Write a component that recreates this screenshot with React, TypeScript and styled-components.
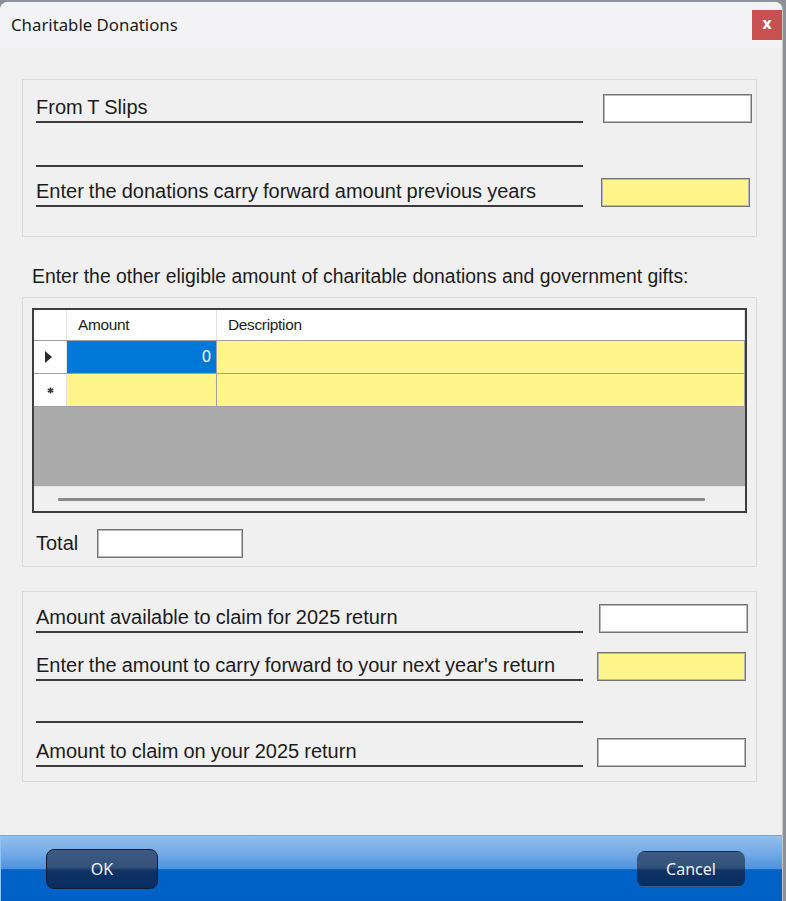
import React from 'react';
import styled, { createGlobalStyle } from 'styled-components';

const GlobalStyle = createGlobalStyle`
  html, body {
    margin: 0;
    padding: 0;
    background: #8d9096;
  }
  #root {
    height: 901px;
    overflow: hidden;
  }
`;

const Window = styled.div`
  width: 783px;
  height: 899px;
  margin-top: 2px;
  display: flex;
  flex-direction: column;
  background: #f0f0f0;
  border-radius: 8px 8px 0 0;
  overflow: hidden;
  box-sizing: border-box;
  border-right: 1px solid #c4c4c4;
`;

const TitleBar = styled.div`
  height: 46px;
  flex: none;
  display: flex;
  align-items: center;
  justify-content: space-between;
  background: #f3f3f6;
  padding-left: 11px;
`;

const Title = styled.span`
  font-family: "Noto Sans", "Open Sans", sans-serif;
  font-size: 16.8px;
  color: #1a1a1a;
  margin-top: -2px;
`;

const CloseButton = styled.div`
  width: 30px;
  height: 30px;
  background: #c75050;
  color: #fff;
  display: flex;
  align-items: center;
  justify-content: center;
  font-family: "DejaVu Sans", sans-serif;
  font-weight: bold;
  font-size: 15px;
  padding-bottom: 2px;
  box-sizing: border-box;
`;

const Content = styled.div`
  flex: 1;
  padding: 31px 0 0 22px;
`;

const Group = styled.div<{ $height: number; $top?: number; $pad: string }>`
  width: 735px;
  height: ${p => p.$height}px;
  margin-top: ${p => p.$top ?? 0}px;
  box-sizing: border-box;
  border: 1px solid #dcdcdc;
  padding: ${p => p.$pad};
`;

const Row = styled.div<{ $top?: number; $gap: number }>`
  display: flex;
  align-items: flex-end;
  height: 29px;
  gap: ${p => p.$gap}px;
  margin-top: ${p => p.$top ?? 0}px;
`;

const LineLabel = styled.div`
  width: 547px;
  box-sizing: border-box;
  border-bottom: 2px solid #3c3c3c;
  font-family: "Liberation Sans", Arial, sans-serif;
  font-size: 20px;
  line-height: 24px;
  height: 29px;
  padding-top: 1px;
  color: #1c1c1c;
  word-spacing: -0.5px;
  white-space: nowrap;
`;

const Field = styled.div<{ $yellow?: boolean; $width?: number }>`
  width: ${p => p.$width ?? 149}px;
  height: 29px;
  box-sizing: border-box;
  border: 1px solid #747474;
  box-shadow: inset 0 0 0 1px #b8b8b8;
  background: ${p => (p.$yellow ? '#fff58a' : '#ffffff')};
`;

const Heading = styled.div`
  margin: 27px 0 9px 10px;
  font-family: "Liberation Sans", Arial, sans-serif;
  font-size: 19.4px;
  line-height: 24px;
  color: #1c1c1c;
  white-space: nowrap;
`;

const Grid = styled.div`
  width: 715px;
  height: 205px;
  box-sizing: border-box;
  border: 2px solid #3e3e3e;
  background: #ababab;
  display: flex;
  flex-direction: column;
`;

const GridRow = styled.div<{ $head?: boolean }>`
  display: grid;
  grid-template-columns: 33px 150px 1fr;
  height: ${p => (p.$head ? 31 : 33)}px;
  box-sizing: border-box;
  border-bottom: 1px solid #a0a0a0;
  background: ${p => (p.$head ? '#ffffff' : '#fff58a')};
`;

const HeadCell = styled.div`
  background: #ffffff;
  border-right: 1px solid #e4e4e4;
  font-family: "Liberation Sans", Arial, sans-serif;
  font-size: 15.4px;
  letter-spacing: -0.3px;
  color: #1c1c1c;
  display: flex;
  align-items: center;
  padding-left: 11px;
`;

const RowHeader = styled.div`
  background: #ffffff;
  border-right: 1px solid #e4e4e4;
  display: flex;
  align-items: center;
  justify-content: center;
`;

const Cell = styled.div<{ $selected?: boolean }>`
  background: ${p => (p.$selected ? '#0078d7' : '#fff58a')};
  border-right: 1px solid #a0a0a0;
  color: #ffffff;
  font-family: "Liberation Sans", Arial, sans-serif;
  font-size: 16px;
  display: flex;
  align-items: center;
  justify-content: flex-end;
  padding-right: 5px;
`;

const Arrow = styled.span`
  width: 0;
  height: 0;
  border-top: 6px solid transparent;
  border-bottom: 6px solid transparent;
  border-left: 7px solid #2a2a2a;
  margin-left: -4px;
`;

const Empty = styled.div`
  flex: 1;
`;

const ScrollArea = styled.div`
  height: 24px;
  background: #f0f0f0;
  border-top: 1px solid #e2e2e2;
  display: flex;
  align-items: center;
  padding: 0 40px 0 24px;
`;

const ScrollLine = styled.div`
  flex: 1;
  height: 3px;
  background: #8a8a8a;
  border-radius: 1px;
`;

const TotalRow = styled.div`
  display: flex;
  align-items: center;
  gap: 19px;
  margin: 16px 0 0 4px;
`;

const TotalLabel = styled.span`
  font-family: "Liberation Sans", Arial, sans-serif;
  font-size: 20px;
  color: #1c1c1c;
`;

const Footer = styled.div`
  height: 66px;
  flex: none;
  box-sizing: border-box;
  border-top: 1px solid #9c9c9c;
  box-shadow: inset 1px 1px 0 #8cc4f4;
  background: linear-gradient(
    to bottom,
    #95bfec 0%,
    #6ea7e4 30%,
    #4f92dc 50%,
    #0062c6 52%,
    #0060c6 100%
  );
  display: flex;
  align-items: center;
  justify-content: space-between;
  padding: 0 37px 0 46px;
`;

const Button = styled.div<{ $width: number; $height: number; $bordered?: boolean }>`
  width: ${p => p.$width}px;
  height: ${p => p.$height}px;
  box-sizing: border-box;
  border-radius: 8px;
  border: 1px solid ${p => (p.$bordered ? '#0d1a30' : 'transparent')};
  background: linear-gradient(to bottom, #3d5a80 0%, #33527a 45%, #0f3264 55%, #0b2e60 100%);
  color: #eef3fa;
  font-family: "Noto Sans", "Open Sans", sans-serif;
  font-size: 16px;
  display: flex;
  align-items: center;
  justify-content: center;
`;

export default function App() {
  return (
    <>
      <GlobalStyle />
      <Window>
        <TitleBar>
          <Title>Charitable Donations</Title>
          <CloseButton>x</CloseButton>
        </TitleBar>
        <Content>
          <Group $height={158} $pad="14px 0 0 13px">
            <Row $gap={20}>
              <LineLabel>From T Slips</LineLabel>
              <Field />
            </Row>
            <Row $gap={20} $top={15}>
              <LineLabel />
            </Row>
            <Row $gap={18} $top={11}>
              <LineLabel>Enter the donations carry forward amount previous years</LineLabel>
              <Field $yellow />
            </Row>
          </Group>

          <Heading>Enter the other eligible amount of charitable donations and government gifts:</Heading>

          <Group $height={270} $pad="10px 0 0 9px">
            <Grid>
              <GridRow $head>
                <HeadCell />
                <HeadCell>Amount</HeadCell>
                <HeadCell>Description</HeadCell>
              </GridRow>
              <GridRow>
                <RowHeader>
                  <Arrow />
                </RowHeader>
                <Cell $selected>0</Cell>
                <Cell />
              </GridRow>
              <GridRow>
                <RowHeader>
                  <svg width="7" height="7" viewBox="0 0 7 7">
                    <path d="M3.5 0.5v6M0.8 2l5.4 3M0.8 5l5.4-3" stroke="#3a3a3a" strokeWidth="1.6" />
                  </svg>
                </RowHeader>
                <Cell />
                <Cell />
              </GridRow>
              <Empty />
              <ScrollArea>
                <ScrollLine />
              </ScrollArea>
            </Grid>
            <TotalRow>
              <TotalLabel>Total</TotalLabel>
              <Field $width={146} />
            </TotalRow>
          </Group>

          <Group $height={191} $top={24} $pad="12px 0 0 13px">
            <Row $gap={16}>
              <LineLabel>Amount available to claim for 2025 return</LineLabel>
              <Field />
            </Row>
            <Row $gap={14} $top={19}>
              <LineLabel>Enter the amount to carry forward to your next year's return</LineLabel>
              <Field $yellow />
            </Row>
            <Row $gap={14} $top={13}>
              <LineLabel />
            </Row>
            <Row $gap={14} $top={15}>
              <LineLabel>Amount to claim on your 2025 return</LineLabel>
              <Field />
            </Row>
          </Group>
        </Content>
        <Footer>
          <Button $width={112} $height={40} $bordered>OK</Button>
          <Button $width={108} $height={36}>Cancel</Button>
        </Footer>
      </Window>
    </>
  );
}
